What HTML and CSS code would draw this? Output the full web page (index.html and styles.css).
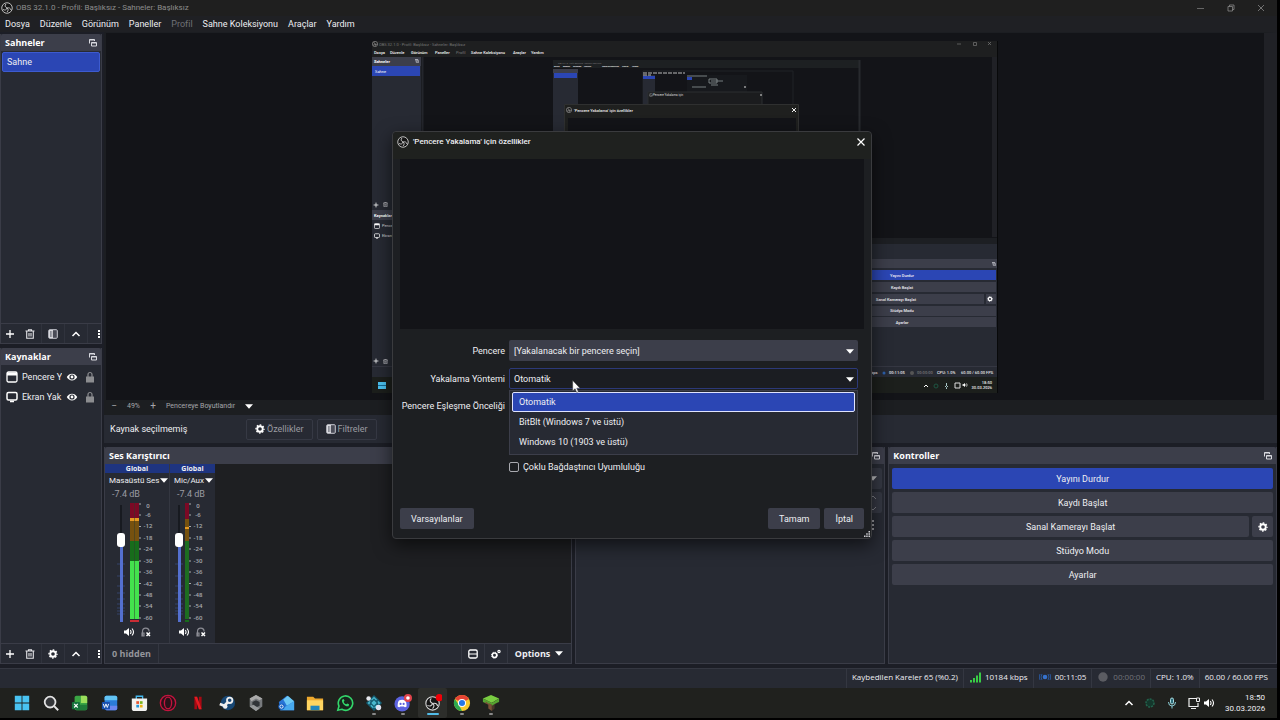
FILE: index.html
```html
<!DOCTYPE html>
<html lang="tr">
<head>
<meta charset="utf-8">
<title>OBS 32.1.0 - Profil: Başlıksız - Sahneler: Başlıksız</title>
<link rel="stylesheet" href="styles.css">
</head>
<body>
<svg class="defs" aria-hidden="true">
  <symbol id="obs" viewBox="0 0 24 24"><circle cx="12" cy="12" r="10.500" fill="#151515" stroke="#d8d8d8" stroke-width="1.700"/><path d="M10 4c-3 3-2 6 2 8 4-1 7 0 8 4M12 12c-1 4-4 5-8 3M12 12c3 2 3 5 0 8" fill="none" stroke="#d8d8d8" stroke-width="1.700"/></symbol>
  <symbol id="float" viewBox="0 0 8 8"><path d="M.5 4.500v-4h5v1.500M.5 1h5M2.500 3.500h5v3.500h-5zM2.500 4h5" fill="none" stroke="#d9dae0"/></symbol>
  <symbol id="plus" viewBox="0 0 10 10"><path d="M5 1v8M1 5h8" stroke="#fff" stroke-width="1.300"/></symbol>
  <symbol id="trash" viewBox="0 0 10 10"><path d="M.5 2h9M3.500 2V.8h3V2M1.700 2v7.300h6.600V2M4 4v3.500M6 4v3.500" fill="none" stroke="#e4e4e8" stroke-width="1.100"/></symbol>
  <symbol id="filter" viewBox="0 0 10 10"><rect x=".7" y=".7" width="8.600" height="8.600" rx="1" fill="#4a4c57" stroke="#c8c9d0"/><path d="M1 1h4v8H1z" fill="#d8d9de"/><path d="M2.500 2v6M3.800 2v6" stroke="#555763" stroke-width=".6"/></symbol>
  <symbol id="up" viewBox="0 0 10 10"><path d="M1.500 7 5 3.500 8.500 7" fill="none" stroke="#fff" stroke-width="1.500"/></symbol>
  <symbol id="dots" viewBox="0 0 4 10"><path d="M1 1h2v2H1zM1 4h2v2H1zM1 7h2v2H1z" fill="#fff"/></symbol>
  <symbol id="gear" viewBox="0 0 12 12"><circle cx="6" cy="6" r="3.300" fill="none" stroke="#fff" stroke-width="2.200"/><circle cx="6" cy="6" r="4.800" fill="none" stroke="#fff" stroke-width="1.600" stroke-dasharray="1.900 1.870" stroke-dashoffset=".95"/></symbol>
  <symbol id="window" viewBox="0 0 12 12"><rect x="1" y="1" width="10" height="10" rx="1.500" fill="none" stroke="#fff" stroke-width="1.300"/><path d="M1 1.500h10v3H1z" fill="#fff"/></symbol>
  <symbol id="display" viewBox="0 0 12 12"><rect x="1" y="1.500" width="10" height="7.500" rx="1.500" fill="none" stroke="#fff" stroke-width="1.500"/><path d="M4 10.500h4" stroke="#fff" stroke-width="1.500"/></symbol>
  <symbol id="eye" viewBox="0 0 12 10"><path d="M.8 5C3 .5 9 .5 11.200 5 9 9.500 3 9.500.8 5z" fill="#fff"/><circle cx="6" cy="5" r="2.600" fill="#272a33"/><circle cx="6" cy="5" r="1.400" fill="#fff"/></symbol>
  <symbol id="lock" viewBox="0 0 10 12"><path d="M3 6V3.500a2 2 0 0 1 4 0V6" fill="none" stroke="#8c8d90" stroke-width="1.200"/><path d="M1 5.500h8v6H1z" fill="#8c8d90"/></symbol>
  <symbol id="down" viewBox="0 0 8 5"><path d="M0 .3h8L4 4.800z" fill="#fff"/></symbol>
  <symbol id="sound" viewBox="0 0 12 10"><path d="M1 3.500h2L6 1v8L3 6.500H1z" fill="#fff"/><path d="M7.300 3q1.500 2 0 4M9 1.500q3 3.500 0 7" fill="none" stroke="#fff" stroke-width="1.100"/></symbol>
  <symbol id="phones" viewBox="0 0 10 10"><path d="M1.500 8.500V4.500a3.300 3.300 0 0 1 6.600 0M1 6h2v3H1z" fill="none" stroke="#8b8c94" stroke-width="1.200"/><path d="m5.500 5.500 3.500 3.500M9 5.500 5.500 9" stroke="#fff" stroke-width="1.500"/></symbol>
</svg>

<div class="app">
  <header class="titlebar">
    <svg class="i12"><use href="#obs"/></svg>
    <h1>OBS 32.1.0 - Profil: Başlıksız - Sahneler: Başlıksız</h1>
    <div class="winctl">
      <button aria-label="Simge durumu"><svg viewBox="0 0 8 8"><path d="M0 4.500h7" stroke="#666"/></svg></button>
      <button aria-label="Önceki boyut"><svg viewBox="0 0 8 8"><path d="M1 2.500h4.500V7H1zM2.500 2.500V1H7v4.500H5.500" fill="none" stroke="#888" stroke-width=".8"/></svg></button>
      <button aria-label="Kapat"><svg viewBox="0 0 8 8"><path d="m1 1 6 6M7 1 1 7" stroke="#888" stroke-width=".8"/></svg></button>
    </div>
  </header>
  <nav class="menubar">
    <button>Dosya</button><button>Düzenle</button><button>Görünüm</button><button>Paneller</button><button disabled>Profil</button><button>Sahne Koleksiyonu</button><button>Araçlar</button><button>Yardım</button>
  </nav>

  <main class="workspace">
    <div class="side">
      <section class="dock scenes-dock">
        <header class="dock-head"><h2>Sahneler</h2><svg class="i8"><use href="#float"/></svg></header>
        <ul class="scenes"><li class="selected">Sahne</li></ul>
        <footer class="tools">
          <button aria-label="Ekle"><svg class="i10"><use href="#plus"/></svg></button>
          <button aria-label="Sil"><svg class="i10"><use href="#trash"/></svg></button>
          <button aria-label="Filtre"><svg class="i10"><use href="#filter"/></svg></button>
          <button aria-label="Yukarı"><svg class="i10"><use href="#up"/></svg></button>
          <button class="last" aria-label="Menü"><svg class="i4"><use href="#dots"/></svg></button>
        </footer>
      </section>
      <section class="dock sources-dock">
        <header class="dock-head"><h2>Kaynaklar</h2><svg class="i8"><use href="#float"/></svg></header>
        <ul class="sources">
          <li><svg class="i12"><use href="#window"/></svg><span>Pencere Y</span><svg class="i12"><use href="#eye"/></svg><svg class="i12"><use href="#lock"/></svg></li>
          <li><svg class="i12"><use href="#display"/></svg><span>Ekran Yak</span><svg class="i12"><use href="#eye"/></svg><svg class="i12"><use href="#lock"/></svg></li>
        </ul>
        <footer class="tools">
          <button aria-label="Ekle"><svg class="i10"><use href="#plus"/></svg></button>
          <button aria-label="Sil"><svg class="i10"><use href="#trash"/></svg></button>
          <button aria-label="Özellikler"><svg class="i10"><use href="#gear"/></svg></button>
          <button aria-label="Yukarı"><svg class="i10"><use href="#up"/></svg></button>
          <button class="last" aria-label="Menü"><svg class="i4"><use href="#dots"/></svg></button>
        </footer>
      </section>
    </div>

    <div class="center">
      <div class="preview">
        <svg class="capture" viewBox="372 41 626 352">
          <rect x="372" y="41" width="626" height="352" fill="#131418"/>
          <rect x="372" y="41" width="626" height="16" fill="#1e1f20"/>
          <use href="#obs" x="372" y="41" width="6" height="6"/>
          <text x="379" y="46" fill="#777" font-size="4">OBS 32.1.0 - Profil: Başlıksız - Sahneler: Başlıksız</text>
          <g class="strong" fill="#f4f4f4" font-size="4"><text x="374" y="54">Dosya</text><text x="390" y="54">Düzenle</text><text x="411" y="54">Görünüm</text><text x="435" y="54">Paneller</text><text x="456" y="54" fill="#666">Profil</text><text x="471" y="54">Sahne Koleksiyonu</text><text x="513" y="54">Araçlar</text><text x="531" y="54">Yardım</text></g>
          <path d="M957 44h4M973.500 42.500h3v3h-3zM988 42l3 3m0-3-3 3" fill="none" stroke="#777" stroke-width=".7"/>
          <rect x="372" y="57" width="49" height="320" fill="#272a33"/>
          <path d="M422.500 57v76" stroke="#24262c" stroke-width="2"/>
          <rect x="372" y="57" width="49" height="9" fill="#3c3e4a"/><text x="374" y="63" fill="#fff" font-size="4" font-weight="700">Sahneler</text><use href="#float" x="415" y="59" width="4" height="4"/>
          <rect x="372" y="66" width="48" height="10" fill="#2b46b4"/><text x="375" y="73" fill="#fff" font-size="4">Sahne</text>
          <use href="#plus" x="373" y="202" width="6" height="6"/><use href="#trash" x="383" y="202" width="5" height="5"/>
          <rect x="372" y="210" width="49" height="10" fill="#3c3e4a"/><text x="374" y="217" fill="#fff" font-size="4" font-weight="700">Kaynaklar</text>
          <use href="#window" x="374" y="223" width="6" height="6"/><text x="382" y="227" fill="#ddd" font-size="4">Pencere</text>
          <use href="#display" x="374" y="233" width="6" height="6"/><text x="382" y="237" fill="#ddd" font-size="4">Ekran</text>
          <use href="#plus" x="373" y="358" width="6" height="6"/><use href="#trash" x="383" y="359" width="5" height="5"/>

          <rect x="553" y="60" width="307" height="80" fill="#131418"/>
          <path d="M553 60h307v8H553z" fill="#1d2022"/><path d="M859.500 60v80" stroke="#282a2e" stroke-width="2"/>
          <text x="558" y="64" fill="#777" font-size="2">OBS 32.1.0 - Profil: Başlıksız - Sahneler: Başlıksız</text>
          <g class="strong" fill="#fff" font-size="2"><text x="554" y="67">Dosya</text><text x="563" y="67">Düzenle</text><text x="573" y="67">Görünüm</text><text x="584" y="67">Paneller</text><text x="602" y="67">Sahne Koleksiyonu</text><text x="622" y="67">Araçlar</text><text x="632" y="67">Yardım</text></g>
          <rect x="553" y="69" width="25" height="70" fill="#272a33"/><rect x="553" y="69" width="25" height="4" fill="#3c3e4a"/><rect x="554" y="73" width="23" height="5" fill="#2b46b4"/>
          <path d="M643 71h150v60H643z" fill="#131418" stroke="#202327"/>
          <rect x="643" y="75" width="12" height="50" fill="#272a33"/><rect x="643" y="76" width="12" height="3" fill="#2b46b4"/><path d="M643 73h42M643 75h8" stroke="#bbb" stroke-width="1" stroke-dasharray="4 1"/>
          <path d="M687 75h60v20h-60z" fill="#17191d"/><path d="M687 77h5v3h-5z" fill="#2b46b4"/><path d="M687 76h20M709 79h8v4h-8zM711 81h12M692 87h14M711 85h7" fill="none" stroke="#8f989b" stroke-width=".8"/>
          <path d="M648 92h114v40H648z" fill="#1b1c1e" stroke="#2d2f31"/><use href="#obs" x="649" y="93" width="4" height="4"/><text x="653" y="96" fill="#ddd" font-size="3">Pencere Yakalama için</text><path d="m760 94 2 2m0-2-2 2M744 86l2 2m0-2-2 2" stroke="#ddd" stroke-width=".5"/>
          <path d="M564.500 104.500h234V140h-234z" fill="#1f201f" stroke="#2f3030"/><rect x="568" y="118" width="228" height="20" fill="#131418"/>
          <use href="#obs" x="566" y="107" width="6" height="6"/><text class="strong" x="574" y="112" fill="#eee" font-size="4">'Pencere Yakalama' için özellikler</text><path d="m792 108 4 4m0-4-4 4" stroke="#eee"/>
          <path d="M994.500 57v180" stroke="#202126" stroke-width="5"/>

          <path d="M421 238h576v139H421z" fill="#272a33"/><path d="M421 238h576v6H421z" fill="#1d1f23"/>
          <path d="M421 259h576v9H421z" fill="#3c3e4a"/><use href="#float" x="992" y="262" width="4" height="4"/>
          <path d="M810 270h186v10H810z" fill="#2b46b4"/><path d="M810 282h186v10H810zM810 294h174v10H810zM986 294h10v10h-10zM810 306h186v10H810zM810 317h186v10H810z" fill="#3c3e4a"/><use href="#gear" x="987" y="296" width="6" height="6"/>
          <g class="strong" fill="#f0f0f4" font-size="4" text-anchor="middle"><text x="902" y="277">Yayını Durdur</text><text x="902" y="289">Kaydı Başlat</text><text x="896" y="301">Sanal Kamerayı Başlat</text><text x="902" y="312">Stüdyo Modu</text><text x="902" y="324">Ayarlar</text></g>
          <path d="M372 366h625v1H372z" fill="#353742"/>
          <g class="strong" fill="#e8e8e8" font-size="4"><text x="871" y="374">bps</text><text x="889" y="374">00:11:05</text><text x="917" y="374" fill="#777">00:00:00</text><text x="937" y="374">CPU: 1.0%</text><text x="961" y="374">60.00 / 60.00 FPS</text></g><circle cx="884" cy="373" r="1.500" fill="#2b5faa"/><circle cx="912" cy="373" r="2" fill="#555"/>
          <path d="M372 377h626v16H372z" fill="#1c1f1c"/><path d="M378 382h8v7h-8z" fill="#4cc2f1"/><path d="M378 385.500h8" stroke="#146b97"/>
          <path d="m924 387 2-2 2 2" fill="none" stroke="#fff"/><circle cx="936" cy="386" r="2" fill="none" stroke="#1e5542"/><path d="M946.500 383v3M945 386q1.500 3 3 0M946.500 388v1" fill="none" stroke="#a8c6c7"/><path d="M955 383h5v5h-5z" fill="none" stroke="#ddd"/><use href="#sound" x="962" y="382" width="6" height="6"/>
          <g class="strong" fill="#eee" font-size="4" text-anchor="end"><text x="992" y="384">18:50</text><text x="992" y="389">30.03.2026</text></g>
          <path d="M997.500 41v352" stroke="#08090a"/>
        </svg>
      </div>
      <div class="zoombar"><button aria-label="Uzaklaştır">−</button><span>49%</span><button aria-label="Yakınlaştır">+</button><span>Pencereye Boyutlandır</span><svg class="arrow"><use href="#down"/></svg></div>
      <div class="context"><span>Kaynak seçilmemiş</span><button disabled><svg class="i10"><use href="#gear"/></svg>Özellikler</button><button disabled><svg class="i10"><use href="#filter"/></svg>Filtreler</button></div>

      <div class="docks">
        <section class="dock mixer">
          <header class="dock-head"><h2>Ses Karıştırıcı</h2></header>
          <div class="strips">
            <div class="strip wide">
              <b>Global</b>
              <button class="name">Masaüstü Ses<svg class="arrow"><use href="#down"/></svg></button>
              <span class="db">-7.4 dB</span>
              <div class="levels">
                <div class="fader"><svg viewBox="0 0 10 120"><path d="M5 3v117" stroke="#171a20" stroke-width="2"/><path d="M1 62h8M1 74h8M1 84h8M1 91h8M1 97h8M1 102h8M1 106h8M1 109h8M1 112h8" stroke="#3b4d83" stroke-width=".7"/></svg><input type="range" min="0" max="100" value="71" aria-label="Masaüstü Ses"></div>
                <svg class="meter" viewBox="0 0 32 124"><path d="M2 1h9v15H2z" fill="#7b0925"/><path d="M2 16h9v3H2z" fill="#e79a22"/><path d="M2 19h9v20H2z" fill="#76510f"/><path d="M2 39h9v20H2z" fill="#176c1b"/><path d="M2 59h9v58H2z" fill="#43e24d"/><path d="M6.500 1v116" stroke="#2f3c2d" stroke-width=".5"/><path d="M2 119h9" stroke="#c92c34" stroke-width="2"/><path d="M11 2h2M11 13h2M11 24.500h2M11 36h2M11 47h2M11 59h2M11 70h2M11 81.500h2M11 93h2M11 104h2M11 116h2" stroke="#aaa"/><g><text x="20" y="6">0</text><text x="20" y="15">-6</text><text x="20" y="26">-12</text><text x="20" y="38">-18</text><text x="20" y="49">-24</text><text x="20" y="61">-30</text><text x="20" y="72">-36</text><text x="20" y="84">-42</text><text x="20" y="95">-48</text><text x="20" y="106">-54</text><text x="20" y="118">-60</text></g></svg>
              </div>
              <div class="mutes"><button aria-label="Sessiz"><svg class="i12"><use href="#sound"/></svg></button><button aria-label="Dinle"><svg class="i10"><use href="#phones"/></svg></button></div>
            </div>
            <div class="strip">
              <b>Global</b>
              <button class="name">Mic/Aux<svg class="arrow"><use href="#down"/></svg></button>
              <span class="db">-7.4 dB</span>
              <div class="levels">
                <div class="fader"><svg viewBox="0 0 10 120"><path d="M5 3v117" stroke="#171a20" stroke-width="2"/><path d="M1 62h8M1 74h8M1 84h8M1 91h8M1 97h8M1 102h8M1 106h8M1 109h8M1 112h8" stroke="#3b4d83" stroke-width=".7"/></svg><input type="range" min="0" max="100" value="71" aria-label="Mic/Aux"></div>
                <svg class="meter" viewBox="0 0 32 124"><path d="M2 1h4v16H2z" fill="#7b0925"/><path d="M2 17h4v22H2z" fill="#76510f"/><path d="M2 25h4v2H2z" fill="#e79a22"/><path d="M2 39h4v78H2z" fill="#1d6d20"/><path d="M2 119h4" stroke="#176c1b" stroke-width="2"/><path d="M6 2h2M6 13h2M6 24.500h2M6 36h2M6 47h2M6 59h2M6 70h2M6 81.500h2M6 93h2M6 104h2M6 116h2" stroke="#aaa"/><g><text x="15" y="6">0</text><text x="15" y="15">-6</text><text x="15" y="26">-12</text><text x="15" y="38">-18</text><text x="15" y="49">-24</text><text x="15" y="61">-30</text><text x="15" y="72">-36</text><text x="15" y="84">-42</text><text x="15" y="95">-48</text><text x="15" y="106">-54</text><text x="15" y="118">-60</text></g></svg>
              </div>
              <div class="mutes"><button aria-label="Sessiz"><svg class="i12"><use href="#sound"/></svg></button><button aria-label="Dinle"><svg class="i10"><use href="#phones"/></svg></button></div>
            </div>
          </div>
          <footer class="mixfoot">
            <button class="hidden-count" disabled>0 hidden</button>
            <span class="fill"></span>
            <button aria-label="Düzen"><svg class="i10" viewBox="0 0 10 10"><rect x=".8" y="1" width="8.400" height="8" rx="1.500" fill="none" stroke="#fff" stroke-width="1.300"/><path d="M1 5h8" stroke="#fff"/></svg></button>
            <button aria-label="Ayarlar"><svg class="i10" viewBox="0 0 10 10"><circle cx="3.500" cy="6.200" r="2.200" fill="none" stroke="#fff" stroke-width="1.500"/><circle cx="3.500" cy="6.200" r="3" fill="none" stroke="#fff" stroke-dasharray="1.200 1.150"/><circle cx="8" cy="2.500" r="1.100" fill="none" stroke="#fff" stroke-width="1.200"/></svg></button>
            <button class="options">Options<svg class="arrow"><use href="#down"/></svg></button>
          </footer>
        </section>

        <section class="dock transitions">
          <header class="dock-head"><svg class="i8"><use href="#float"/></svg></header>
          <div class="trans-row"><svg class="arrow"><use href="#down"/></svg></div>
          <div class="trans-row"><svg viewBox="0 0 8 18" width="8" height="18"><path d="m1 5 3-3 3 3M1 13l3 3 3-3" fill="none" stroke="#a5a6ad"/></svg></div>
          <button class="trans-more" aria-label="Menü"><svg class="i10" viewBox="0 0 4 10"><path d="M1 0h2v2H1zM1 4h2v2H1zM1 8h2v2H1z" fill="#96979d"/></svg></button>
        </section>

        <section class="dock controls">
          <header class="dock-head"><h2>Kontroller</h2><svg class="i8"><use href="#float"/></svg></header>
          <div class="buttons">
            <button class="active">Yayını Durdur</button>
            <button>Kaydı Başlat</button>
            <div class="pair"><button>Sanal Kamerayı Başlat</button><button aria-label="Kamera ayarları"><svg class="i10"><use href="#gear"/></svg></button></div>
            <button>Stüdyo Modu</button>
            <button>Ayarlar</button>
          </div>
        </section>
      </div>
    </div>
  </main>

  <footer class="status">
    <span>Kaybedilen Kareler 65 (%0.2)</span>
    <span><svg class="i12" viewBox="0 0 12 12"><path d="M1 9h2v2.500H1zM4 7h2v4.500H4zM7 4.500h2v7H7zM10 1.500h2v10h-2z" fill="#38cc45"/></svg>10184 kbps</span>
    <span><svg class="i12" viewBox="0 0 12 12"><circle cx="6" cy="6" r="2.300" fill="#3672cc"/><path d="M3 3q-2 3 0 6M9 3q2 3 0 6M1 3q-1.500 3 0 6M11 3q1.500 3 0 6" fill="none" stroke="#28579c"/></svg>00:11:05</span>
    <span class="dim"><svg class="i12" viewBox="0 0 12 12"><circle cx="6" cy="6" r="4.700" fill="#5b5c62"/></svg>00:00:00</span>
    <span>CPU: 1.0%</span>
    <span>60.00 / 60.00 FPS</span>
  </footer>

  <footer class="taskbar">
    <div class="apps">
      <button aria-label="Başlat"><svg viewBox="0 0 20 20"><path d="M2 2h7.500v7.500H2zM10.500 2H18v7.500h-7.500zM2 10.500h7.500V18H2zM10.500 10.500H18V18h-7.500z" fill="#49c3f2"/></svg></button>
      <button aria-label="Ara"><svg viewBox="0 0 20 20"><circle cx="9" cy="9" r="6" fill="#35373a" stroke="#e3e3e3" stroke-width="2"/><path d="m13.500 13.500 4.500 4.500" stroke="#e3e3e3" stroke-width="2.200"/></svg></button>
      <button aria-label="Excel"><svg viewBox="0 0 20 20"><rect x="4" y="2" width="14" height="16" rx="2" fill="#3aa544"/><path d="M11 2h5a2 2 0 0 1 2 2v6h-7z" fill="#9bdf5b"/><path d="M4 12h14v4a2 2 0 0 1-2 2H6z" fill="#207c3a"/><rect x="1" y="9" width="9" height="8" rx="1" fill="#17733d"/><path d="m3.500 11 4 4m0-4-4 4" stroke="#fff" stroke-width="1.300"/></svg></button>
      <button aria-label="Word"><svg viewBox="0 0 20 20"><rect x="4" y="2" width="14" height="16" rx="2" fill="#2b7cd8"/><path d="M4 7V4q0-2 2-2h10q2 0 2 2v3z" fill="#62c4f4"/><path d="M4 13h14v3q0 2-2 2H6z" fill="#6c87ef"/><rect x="1" y="9" width="9" height="8" rx="1" fill="#194fae"/><path d="m2.500 11 1.500 4 1.500-4L7 15l1.500-4" fill="none" stroke="#fff"/></svg></button>
      <button aria-label="Store"><svg viewBox="0 0 20 20"><path d="M7 6V2.500h7V6" fill="none" stroke="#43b9ef" stroke-width="1.500"/><path d="M2 5h17v11q0 3-3 3H5q-3 0-3-3z" fill="#f1f1ef"/><path d="M7 8h3v3H7z" fill="#e8542f"/><path d="M11 8h3v3h-3z" fill="#7ab51d"/><path d="M7 12h3v3H7z" fill="#2196dc"/><path d="M11 12h3v3h-3z" fill="#eeb316"/></svg></button>
      <button aria-label="Opera"><svg viewBox="0 0 20 20"><circle cx="10" cy="10" r="8.500" fill="#291219" stroke="#c3143e" stroke-width="1.500"/><ellipse cx="10" cy="10" rx="4" ry="6.500" fill="none" stroke="#c3143e" stroke-width="1.500"/></svg></button>
      <button aria-label="Netflix"><svg viewBox="0 0 20 20"><path d="M6 3h3v14H6zM11 3h3v14h-3z" fill="#a90913"/><path d="M6 3h3l5 14h-3z" fill="#e51b22"/></svg></button>
      <button aria-label="Steam"><svg viewBox="0 0 20 20"><circle cx="11" cy="10" r="8" fill="#174774"/><path d="m2 11 5 2 5-5" fill="none" stroke="#eee" stroke-width="3"/><circle cx="13" cy="7" r="3" fill="#174774" stroke="#eee" stroke-width="2"/><circle cx="8" cy="14" r="2.500" fill="#eee"/></svg></button>
      <button aria-label="Roblox Studio"><svg viewBox="0 0 20 20"><path d="m10 1 7 4v9l-7 5-7-5V5z" fill="#777a7d"/><path d="m10 1 7 4-3 2-4-2-5 3-2-3z" fill="#aaa"/><path d="m10 7 4 2v4l-4 2-4-2V9z" fill="#303438"/><path d="m3 14 4-2 7 4-4 3z" fill="#96999b"/></svg></button>
      <button aria-label="Posta"><svg viewBox="0 0 20 20"><path d="m2 9 9-7 8 6v10H4z" fill="#2874d5"/><path d="m7 6 5-4 7 6-8 5z" fill="#6cc8f4"/><path d="m3 18 16-10v10z" fill="#48a9ee"/><circle cx="5" cy="14" r="3.500" fill="#145ec0"/><circle cx="5" cy="14" r="1.800" fill="none" stroke="#fff"/></svg></button>
      <button aria-label="Dosyalar"><svg viewBox="0 0 20 20"><path d="M1 3h7l2 2h9v13H1z" fill="#eda92e"/><path d="M1 7h18v11H1z" fill="#ffd561"/><path d="M5 13h10v5H5z" fill="#2387bd"/></svg></button>
      <button aria-label="WhatsApp"><svg viewBox="0 0 20 20"><path d="m2 18 1.300-4.500A8 8 0 1 1 6.500 17z" fill="#17251c" stroke="#33d66a" stroke-width="1.800"/><path d="M7 6c-2 3 4 9 7 7.500l.5-2-2-1-1 1C10 11 9 10 8.500 8.500l1-1L8.500 5.500z" fill="#33d66a"/></svg></button>
      <button class="run" aria-label="Uygulama"><svg viewBox="0 0 20 20"><path d="m10 1 9 9-9 9-9-9z" fill="#155b70"/><path d="m10 4 6 6-6 6-6-6z" fill="none" stroke="#4bb9ce" stroke-width="1.500" stroke-dasharray="4 2"/><path d="m10 7 3 3-3 3-3-3z" fill="#4bb9ce"/><circle cx="4" cy="5" r="2.500" fill="#e6e8ed"/><circle cx="15" cy="15" r="3" fill="#dfe2ef"/></svg></button>
      <button class="run" aria-label="Discord"><svg viewBox="0 0 20 20"><circle cx="9" cy="11" r="8.500" fill="#5b62df"/><path d="M4 14q0-6 2-7 3-1 6 0 2 1 2 7-2 1.500-3 0H7q-1 1.500-3 0z" fill="#fff"/><circle cx="7.300" cy="11" r="1.200" fill="#5b62df"/><circle cx="10.700" cy="11" r="1.200" fill="#5b62df"/><circle cx="15.500" cy="4.500" r="4.500" fill="#e0434b"/><circle cx="15.500" cy="4.500" r="2" fill="#fff"/></svg></button>
      <button class="run current" aria-label="OBS"><svg viewBox="0 0 20 20"><use href="#obs" x="1" y="2" width="17" height="17"/><circle cx="17" cy="4" r="4" fill="#f00008"/></svg></button>
      <button class="run" aria-label="Chrome"><svg viewBox="0 0 20 20"><circle cx="10" cy="10" r="9" fill="#f8cb2c"/><path d="M10 10 2.200 5.500a9 9 0 0 1 15.600 0z" fill="#e64334"/><path d="M2.200 5.500 7 13l3 6A9 9 0 0 1 2.200 5.500z" fill="#2da94f"/><circle cx="10" cy="10" r="4.500" fill="#fff"/><circle cx="10" cy="10" r="3.400" fill="#2678e6"/></svg></button>
      <button class="run" aria-label="Minecraft"><svg viewBox="0 0 20 20"><path d="m10 1 9 4-8 5-10-5z" fill="#79cd41"/><path d="m3 6 8 4v9l-4-3v-4l-4-2z" fill="#795137"/><path d="m11 10 6-4v4l-3 2v4l-3 3z" fill="#473728"/><path d="M1 5v4l3 1V8l4 3v-1l3 2v-2zM11 10l8-5v4l-3 1-2 1-3 2z" fill="#55a531"/></svg></button>
    </div>
    <div class="tray">
      <svg class="i10"><use href="#up"/></svg>
      <svg class="i12" viewBox="0 0 12 12"><circle cx="6" cy="6" r="4" fill="#14372c" stroke="#23634c" stroke-width="1.500" stroke-dasharray="2 1"/></svg>
      <svg class="i12" viewBox="0 0 12 12"><rect x="4.500" y="1" width="3" height="6" rx="1.500" fill="#2d6c7a" stroke="#a9dce1"/><path d="M2.500 5q0 4 3.500 4t3.500-4M6 9v2.500" fill="none" stroke="#8ed0d8"/></svg>
      <div class="net"><svg class="i12" viewBox="0 0 12 12"><path d="M8 1.500H1v8h9V6M3 11.500h5" fill="none" stroke="#eee" stroke-width="1.200"/><path d="M8.500 1h3v3.500h-3z" fill="none" stroke="#eee"/></svg><svg class="i12"><use href="#sound"/></svg></div>
      <time>18:50<br>30.03.2026</time>
    </div>
  </footer>

  <div class="dialog" role="dialog" aria-labelledby="dlg-title">
    <header class="dlg-head"><svg class="i12"><use href="#obs"/></svg><h2 id="dlg-title">'Pencere Yakalama' için özellikler</h2><button aria-label="Kapat"><svg class="i10" viewBox="0 0 10 10"><path d="m1.500 1.500 7 7m0-7-7 7" stroke="#fff" stroke-width="1.200"/></svg></button></header>
    <div class="dlg-view"></div>
    <div class="form">
      <label for="f1">Pencere</label>
      <div class="combo"><select id="f1"><option>[Yakalanacak bir pencere seçin]</option></select><svg class="arrow"><use href="#down"/></svg></div>
      <label for="f2">Yakalama Yöntemi</label>
      <div class="combo open"><select id="f2"><option>Otomatik</option></select><svg class="arrow"><use href="#down"/></svg>
        <ul class="popup" role="listbox"><li role="option" aria-selected="true">Otomatik</li><li role="option">BitBlt (Windows 7 ve üstü)</li><li role="option">Windows 10 (1903 ve üstü)</li></ul>
        <svg class="cursor" viewBox="0 0 8 12"><path d="M.5.500v9.500l2.200-2 1.500 3.500 1.500-.7L4.200 7.500h3z" fill="#fff" stroke="#333" stroke-width=".4"/></svg>
      </div>
      <span class="lbl">Pencere Eşleşme Önceliği</span>
      <label class="check"><input type="checkbox">Çoklu Bağdaştırıcı Uyumluluğu</label>
    </div>
    <footer class="dlg-foot"><button>Varsayılanlar</button><button class="ok">Tamam</button><button>İptal</button></footer>
    <svg class="grip" viewBox="0 0 6 6"><path d="M4.500 0h1.500v1.500H4.500zM2.200 2.200h1.500v1.500H2.200zM4.500 2.200h1.500v1.500H4.500zM0 4.500h1.500V6H0zM2.200 4.500h1.500V6H2.200zM4.500 4.500h1.500V6H4.500z" fill="#d0d0d4"/></svg>
  </div>
</div>
</body>
</html>
```
FILE: styles.css
```css
* { box-sizing: border-box; }
body { margin: 0; background: #000; color: #eeeef2; font: 9px/12px Roboto, "Open Sans", sans-serif; }
h1, h2, ul { margin: 0; padding: 0; font-size: 9px; line-height: 12px; list-style: none; }
button, select { font: inherit; color: inherit; border: 0; padding: 0; margin: 0; background: none; }
button { display: flex; align-items: center; justify-content: center; white-space: nowrap; }
svg { flex: none; display: block; }
.defs { position: absolute; width: 0; height: 0; }
.i4 { width: 4px; height: 10px; }
.i8 { width: 8px; height: 8px; }
.i10 { width: 10px; height: 10px; }
.i12 { width: 12px; height: 12px; }
.arrow { width: 8px; height: 5px; }

.app { position: relative; display: flex; flex-direction: column; min-height: 100vh; padding: 0 3px 2px 0; background: #000; }
.titlebar { display: flex; align-items: center; gap: 3px; height: 16px; background: #1f1f1f; }
.titlebar h1 { font-size: 8px; font-weight: 400; color: #8c8c8c; }
.titlebar > svg { margin-left: 1px; }
.winctl { display: flex; gap: 22px; margin-left: auto; padding-right: 12px; }
.winctl svg { width: 8px; height: 8px; }
.menubar { display: flex; gap: 10px; height: 16px; padding: 0 5px; background: #1f2024; }
.menubar button:disabled { color: #707176; }

.workspace { flex: 1; display: flex; gap: 2px; background: #1c1e26; padding-bottom: 4px; }
.side { display: flex; flex-direction: column; gap: 4px; width: 102px; padding-top: 2px; }
.scenes-dock { flex: 310; }
.sources-dock { flex: 316; }
.dock { display: flex; flex-direction: column; background: #272a33; border: 1px solid #3a3c47; border-top: 0; min-width: 0; }
.dock-head { display: flex; align-items: center; justify-content: space-between; height: 17px; padding: 0 4px; background: #3c3e4a; border-radius: 2px 2px 0 0; }
.dock-head h2 { font-family: "Open Sans", sans-serif; font-weight: 700; color: #fff; }
.dock-head svg { margin-left: auto; }
.scenes { flex: 1; padding: 1px; }
.scenes li { padding: 4px 5px; border-radius: 2px; }
.scenes .selected { background: #2b46b4; border: 1px solid #3d5bd0; padding: 3px 4px; }
.sources { flex: 1; padding: 2px 5px; }
.sources li { display: flex; align-items: center; gap: 4px; height: 20px; }
.sources span { width: 41px; overflow: hidden; white-space: nowrap; }
.sources svg:nth-child(3) { margin-right: 2px; }
.tools { display: flex; height: 20px; border-top: 1px solid #3a3c47; overflow: hidden; }
.tools button { flex: 0 0 23px; border-right: 1px solid #30333d; }
.tools button:first-child { flex-basis: 18px; border: 0; }
.tools .last { flex: 1; justify-content: flex-end; border: 0; }

.center { flex: 1; display: flex; flex-direction: column; min-width: 0; }
.preview { flex: 1; display: flex; align-items: center; justify-content: center; background: #131418; border-right: 13px solid #202126; border-left: 2px solid #1c1e22; border-top: 1px solid #1c1e22; overflow: hidden; }
.capture { width: 626px; height: 352px; }
.strong { font-weight: 500; }
.zoombar { display: flex; align-items: center; gap: 10px; height: 14px; padding: 0 0 2px 7px; background: #1c1e21; color: #a5a6aa; font-size: 7px; }
.zoombar button { font-size: 10px; width: 6px; }
.context { display: flex; align-items: center; gap: 4px; height: 29px; padding-left: 6px; background: #272a33; border-top: 1px solid #1c1e21; }
.context span { width: 132px; }
.context button { gap: 2px; height: 21px; padding: 0 8px; color: #9b9ca2; border: 1px solid #363944; border-radius: 2px; }
.docks { display: grid; grid-template-columns: 468fr 311fr 389fr; gap: 3px; height: 217px; margin-top: 4px; }

.strips { flex: 1; display: flex; background: #1e1f22; }
.strip { width: 45px; display: flex; flex-direction: column; background: #272a33; }
.wide { width: 65px; border-right: 1px solid #343741; }
.strip b { height: 9px; font: 700 7px/9px "Open Sans", sans-serif; text-align: center; background: #1e3480; }
.name { justify-content: space-between; height: 15px; padding: 0 2px 0 4px; font-size: 8px; }
.db { padding: 0 7px; color: #9b9ca3; }
.levels { display: flex; padding: 2px 0 0 11px; }
.strip:not(.wide) .levels { padding-left: 4px; }
.fader { position: relative; width: 10px; height: 120px; }
.fader svg, .fader input { position: absolute; inset: 0; width: 10px; height: 120px; margin: 0; }
.fader input { appearance: none; writing-mode: vertical-lr; direction: rtl; background: linear-gradient(#5470cf, #5470cf) bottom center / 3px 80px no-repeat; }
.fader input::-webkit-slider-thumb { appearance: none; width: 8px; height: 14px; border-radius: 3px; background: #fff; }
.meter { width: 32px; height: 124px; margin: 0 0 0 2px; }
.meter text { font: 600 6px "Open Sans", sans-serif; fill: #a9aab0; text-anchor: middle; }
.mutes { display: flex; gap: 6px; padding-left: 18px; }
.strip:not(.wide) .mutes { padding-left: 8px; }
.mixfoot { display: flex; height: 20px; border-top: 1px solid #3a3c47; font-family: "Open Sans", sans-serif; font-weight: 700; }
.mixfoot button { width: 23px; border-left: 1px solid #343741; }
.mixfoot .fill { flex: 1; border-left: 1px solid #343741; }
.mixfoot .hidden-count { width: 53px; color: #94959b; border: 0; }
.mixfoot .options { width: 64px; gap: 5px; }
.trans-row { display: flex; align-items: center; justify-content: flex-end; height: 21px; margin: 4px 2px 0 4px; padding-right: 5px; background: #3c3e4a; opacity: .7; border-radius: 2px; }
.trans-row + .trans-row { margin-top: 3px; }
.trans-more { align-self: flex-end; height: 20px; margin: 2px 6px 0 0; }
.buttons { display: flex; flex-direction: column; gap: 3px; padding: 4px 3px 0; }
.buttons button { flex: 1 0 auto; height: 21px; background: #3c3e4a; border-radius: 2px; }
.buttons .active { background: #2b46b4; }
.pair { display: flex; gap: 3px; }
.pair button:last-child { flex: 0 0 21px; }

.status { display: flex; justify-content: flex-end; height: 20px; background: #272a33; border-top: 1px solid #343741; font: 8px/12px "Open Sans", sans-serif; }
.status span { display: flex; align-items: center; gap: 4px; padding: 0 5px 3px; border-left: 1px solid #343741; white-space: nowrap; }
.status span:last-child { padding-right: 9px; }
.status .dim { color: #73747a; }
.taskbar { display: flex; justify-content: space-between; height: 30px; background: #20211e; }
.apps { display: grid; grid-template-columns: repeat(17, 1fr); width: 499px; margin-left: 7px; }
.apps button { position: relative; }
.apps svg { width: 18px; height: 18px; }
.run::after { content: ""; position: absolute; bottom: 3px; left: 50%; width: 4px; height: 2px; margin-left: -2px; border-radius: 1px; background: #888; }
.current { background: #2d2e2b; border-radius: 2px; }
.current::after { width: 12px; margin-left: -6px; background: #52bce8; }
.tray { display: flex; align-items: center; gap: 10px; padding-right: 12px; }
.net { display: flex; gap: 3px; }
.tray time { width: 40px; font-size: 8px; line-height: 11px; text-align: right; }

.dialog { position: absolute; left: 392px; top: 131px; width: 480px; height: 408px; display: flex; flex-direction: column; padding: 0 7px 9px; background: #1d1f22; border: 1px solid #3a3b3e; border-radius: 4px; box-shadow: 0 6px 18px rgba(0, 0, 0, .6); }
.dlg-head { display: flex; align-items: center; gap: 4px; height: 27px; margin: 0 -7px; padding: 0 5px 8px 4px; background: #1f211f; border-radius: 4px 4px 0 0; }
.dlg-head h2 { font-size: 8px; font-weight: 500; }
.dlg-head button { margin-left: auto; }
.dlg-view { height: 170px; background: #131418; }
.form { display: grid; grid-template-columns: 105px 1fr; column-gap: 4px; row-gap: 7px; align-items: center; padding: 11px 6px 0 0; }
.form > label, .lbl { text-align: right; white-space: nowrap; }
.combo { position: relative; height: 21px; }
.combo select { appearance: none; display: block; width: 100%; height: 21px; padding: 0 5px; background: #3c3e4a; border-radius: 2px; }
.combo .arrow { position: absolute; right: 4px; top: 9px; }
.open select { background: #1b1d22; border: 1px solid #2c3978; padding: 0 4px; }
.popup { position: absolute; left: 0; right: 0; top: 22px; padding: 1px 2px 2px; background: #272a33; border: 1px solid #3c3e4a; z-index: 1; }
.popup li { height: 20px; padding: 4px 7px; }
.popup [aria-selected="true"] { padding: 3px 6px; background: #2b46b4; border: 1px solid #dfe3ff; border-radius: 2px; }
.cursor { position: absolute; left: 63px; top: 12px; width: 9px; height: 13px; z-index: 2; }
.form .lbl { height: 21px; line-height: 21px; }
.form .check { grid-column: 2; grid-row: 4; display: flex; align-items: center; gap: 4px; margin-top: 37px; text-align: left; }
.check input { appearance: none; width: 10px; height: 10px; margin: 0; border: 1px solid #a9aab0; border-radius: 2px; }
.dlg-foot { display: flex; gap: 4px; margin-top: auto; }
.dlg-foot button { height: 21px; padding: 0 11px; background: #3c3e4a; border-radius: 2px; }
.dlg-foot .ok { margin-left: auto; }
.grip { position: absolute; right: 1px; bottom: 1px; width: 6px; height: 6px; }
```
